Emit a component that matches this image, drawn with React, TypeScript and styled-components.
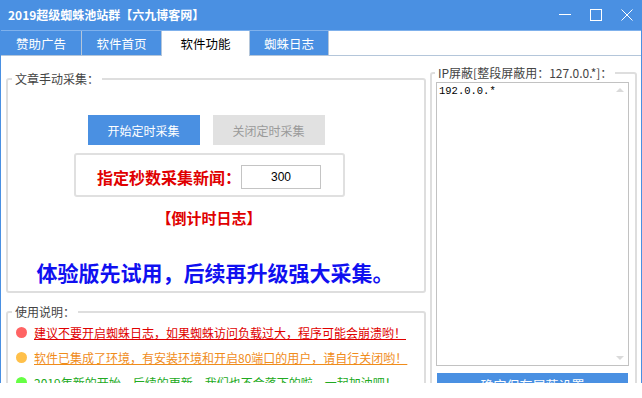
import React from 'react';
import styled, { createGlobalStyle } from 'styled-components';

const BLUE = '#4a90e2';
const UI_FONT = '"Noto Sans CJK SC", "Liberation Sans", sans-serif';

const GlobalStyle = createGlobalStyle`
  html, body {
    margin: 0;
    padding: 0;
    background: #fff;
  }
  body {
    font-family: ${UI_FONT};
    font-size: 12px;
    color: #333;
  }
`;

const tabs = ['赞助广告', '软件首页', '软件功能', '蜘蛛日志'];
const tabWidths = [81, 80, 88, 79];

const notes = [
  { text: '建议不要开启蜘蛛日志，如果蜘蛛访问负载过大，程序可能会崩溃哟！', dot: '#ff6464', color: '#e00000' },
  { text: '软件已集成了环境，有安装环境和开启80端口的用户，请自行关闭哟！', dot: '#ffc04a', color: '#f08c1a' },
  { text: '2019年新的开始，后续的更新，我们也不会落下的啦，一起加油吧！', dot: '#66ff44', color: '#22aa22' },
];

const App = () => {
  return (
    <>
      <GlobalStyle />
      <Window>
        <TitleBar>
          <Title>2019超级蜘蛛池站群【六九博客网】</Title>
          <Controls>
            <svg width="12" height="12" viewBox="0 0 12 12">
              <line x1="0" y1="5.5" x2="12" y2="5.5" stroke="#fff" strokeWidth="1" />
            </svg>
            <svg width="12" height="12" viewBox="0 0 12 12">
              <rect x="0.5" y="0.5" width="11" height="11" fill="none" stroke="#fff" strokeWidth="1" />
            </svg>
            <svg width="12" height="12" viewBox="0 0 12 12">
              <path d="M0.5 0.5 L11.5 11.5 M11.5 0.5 L0.5 11.5" stroke="#fff" strokeWidth="1" />
            </svg>
          </Controls>
        </TitleBar>
        <Body>
          <TabStrip>
            {tabs.map((t, i) => (
              <Tab key={t} $active={i === 2} $width={tabWidths[i]}>
                {t}
              </Tab>
            ))}
            <TabFiller />
          </TabStrip>
          <Content>
            <LeftColumn>
              <CollectBox>
                <Legend>文章手动采集：</Legend>
                <Centered>
                  <ButtonRow>
                    <ActionButton>开始定时采集</ActionButton>
                    <ActionButton $disabled>关闭定时采集</ActionButton>
                  </ButtonRow>
                  <IntervalBox>
                    <IntervalLabel>指定秒数采集新闻：</IntervalLabel>
                    <IntervalInput defaultValue="300" />
                  </IntervalBox>
                  <Countdown>【倒计时日志】</Countdown>
                  <Promo>体验版先试用，后续再升级强大采集。</Promo>
                </Centered>
              </CollectBox>
              <NotesBox>
                <Legend>使用说明：</Legend>
                {notes.map((n) => (
                  <NoteRow key={n.text}>
                    <Dot $color={n.dot} />
                    <NoteText $color={n.color}>{n.text}</NoteText>
                  </NoteRow>
                ))}
              </NotesBox>
            </LeftColumn>
            <RightColumn>
              <IpBox>
                <Legend $right>IP屏蔽[整段屏蔽用：127.0.0.*]：</Legend>
                <AreaWrap>
                  <IpArea defaultValue="192.0.0.*" spellCheck={false} />
                </AreaWrap>
                <SaveButton>确定保存屏蔽设置</SaveButton>
              </IpBox>
            </RightColumn>
          </Content>
        </Body>
      </Window>
    </>
  );
};

export default App;

const Window = styled.div`
  width: 642px;
  height: 383px;
  overflow: hidden;
  display: flex;
  flex-direction: column;
  background: #fff;
`;

const TitleBar = styled.div`
  height: 30px;
  flex: none;
  display: flex;
  align-items: center;
  padding: 0 9px 0 8px;
  background: ${BLUE};
  color: #fff;
`;

const Title = styled.div`
  flex: 1;
  font-size: 12px;
  font-weight: 700;
  line-height: 16px;
`;

const Controls = styled.div`
  display: flex;
  align-items: center;
  gap: 19px;

  svg {
    display: block;
  }
`;

const Body = styled.div`
  display: flex;
  flex-direction: column;
  border-left: 1px solid ${BLUE};
  border-right: 1px solid ${BLUE};
`;

const TabStrip = styled.div`
  display: flex;
  height: 25px;
  border-top: 1px solid #7fb1ec;
`;

const Tab = styled.div<{ $active?: boolean; $width: number }>`
  box-sizing: border-box;
  width: ${({ $width }) => $width}px;
  display: flex;
  align-items: center;
  justify-content: center;
  font-size: 12.5px;
  background: ${({ $active }) => ($active ? '#fff' : BLUE)};
  color: ${({ $active }) => ($active ? '#000' : '#fff')};
  border-right: 1px solid #b4c6da;
  border-bottom: ${({ $active }) => ($active ? 'none' : '1px solid #b4c6da')};
`;

const TabFiller = styled.div`
  flex: 1;
  border-bottom: 1px solid #b4c6da;
`;

const Content = styled.div`
  display: flex;
  align-items: flex-start;
  gap: 4px;
  padding: 0 4px 0 5px;
`;

const LeftColumn = styled.div`
  width: 420px;
  display: flex;
  flex-direction: column;
`;

const RightColumn = styled.div`
  flex: 1;
  display: flex;
  flex-direction: column;
`;

const GroupBox = styled.fieldset`
  margin: 0;
  padding: 0;
  min-width: 0;
  border: 2px solid #dedede;
  border-radius: 3px;
`;

const CollectBox = styled(GroupBox)`
  margin-top: 15px;
  padding-bottom: 5px;
`;

const NotesBox = styled(GroupBox)`
  margin-top: 11px;
  padding-bottom: 12px;
`;

const IpBox = styled(GroupBox)`
  margin-top: 9px;
  padding-bottom: 10px;
`;

const Legend = styled.legend<{ $right?: boolean }>`
  margin-left: ${({ $right }) => ($right ? 3 : 4)}px;
  padding: 0 3px;
  font-size: 12px;
  line-height: 16px;
  color: #444;
`;

const Centered = styled.div`
  display: flex;
  flex-direction: column;
  align-items: center;
  padding-right: 14px;
`;

const ButtonRow = styled.div`
  display: flex;
  gap: 13px;
  margin: 28px 6px 0 0;
`;

const ActionButton = styled.div<{ $disabled?: boolean }>`
  width: 112px;
  height: 30px;
  display: flex;
  align-items: center;
  justify-content: center;
  font-size: 12px;
  background: ${({ $disabled }) => ($disabled ? '#e1e1e1' : BLUE)};
  color: ${({ $disabled }) => ($disabled ? '#9a9a9a' : '#fff')};
`;

const IntervalBox = styled.div`
  box-sizing: border-box;
  width: 271px;
  height: 44px;
  margin-top: 8px;
  padding-top: 3px;
  display: flex;
  align-items: center;
  justify-content: center;
  border: 2px solid #e0e0e0;
  border-radius: 3px;
`;

const IntervalLabel = styled.span`
  font-size: 16px;
  font-weight: 700;
  color: #e00000;
  white-space: nowrap;
`;

const IntervalInput = styled.input`
  box-sizing: border-box;
  width: 80px;
  height: 24px;
  margin: 0;
  padding: 0;
  border: 1px solid #c4c4c4;
  text-align: center;
  font-family: "Liberation Sans", Arial, sans-serif;
  font-size: 12px;
  color: #000;
  outline: none;
`;

const Countdown = styled.div`
  margin-top: 12px;
  font-size: 15px;
  line-height: 18px;
  font-weight: 700;
  color: #e00000;
`;

const Promo = styled.div`
  margin-top: 32px;
  margin-left: 12px;
  font-size: 21px;
  line-height: 27px;
  font-weight: 700;
  color: #1010f0;
  white-space: nowrap;
`;

const NoteRow = styled.div`
  height: 25px;
  display: flex;
  align-items: center;
  gap: 7px;
  padding-left: 8px;
`;

const Dot = styled.span<{ $color: string }>`
  width: 11px;
  height: 11px;
  border-radius: 50%;
  flex: none;
  background: ${({ $color }) => $color};
`;

const NoteText = styled.span<{ $color: string }>`
  font-size: 12px;
  color: ${({ $color }) => $color};
  text-decoration: underline;
  white-space: nowrap;
`;

const AreaWrap = styled.div`
  position: relative;
  margin: 1px 6px 0 4px;

  &::before,
  &::after {
    content: '';
    position: absolute;
    right: 5px;
    border-left: 4px solid transparent;
    border-right: 4px solid transparent;
  }
  &::before {
    top: 6px;
    border-bottom: 4px solid #dadada;
  }
  &::after {
    bottom: 6px;
    border-top: 4px solid #dadada;
  }
`;

const IpArea = styled.textarea`
  display: block;
  box-sizing: border-box;
  width: 100%;
  height: 284px;
  margin: 0;
  padding: 1px 2px;
  border: 1px solid #c2c2c2;
  resize: none;
  overflow: hidden;
  outline: none;
  font-family: "Liberation Mono", "DejaVu Sans Mono", monospace;
  font-size: 10.5px;
  line-height: 14px;
  color: #000;
`;

const SaveButton = styled.div`
  height: 30px;
  margin: 7px 7px 0 5px;
  display: flex;
  align-items: center;
  justify-content: center;
  padding-bottom: 8px;
  box-sizing: border-box;
  background: ${BLUE};
  color: #fff;
  font-size: 13px;
`;
